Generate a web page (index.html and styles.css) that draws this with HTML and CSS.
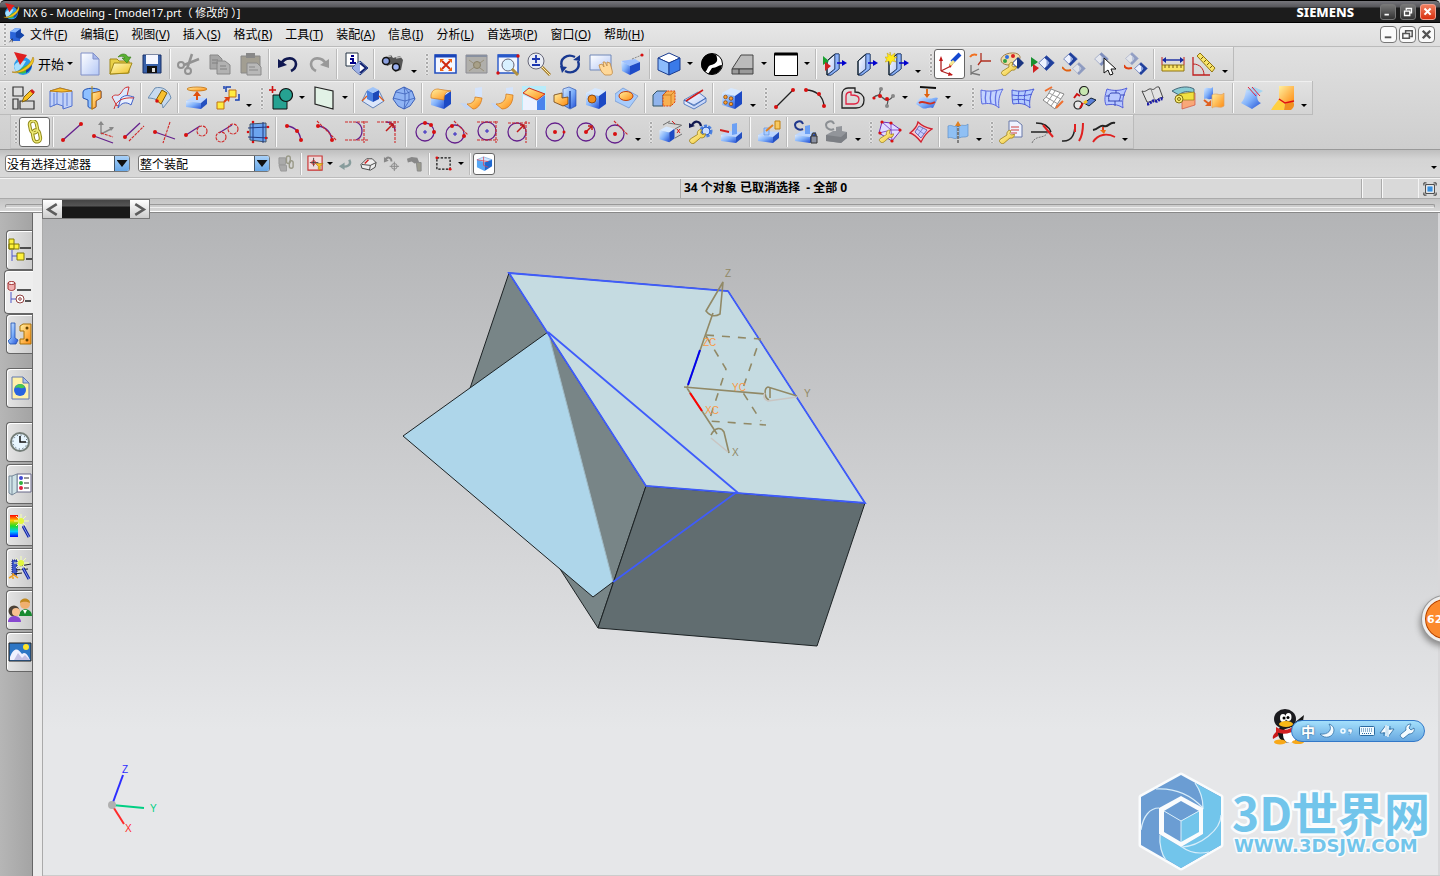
FILE: index.html
```
<!DOCTYPE html>
<html lang="zh-CN">
<head>
<meta charset="utf-8">
<title>NX 6 - Modeling</title>
<link rel="stylesheet" href="styles.css">
</head>
<body>
<svg class="defs" aria-hidden="true">
<defs>
<linearGradient id="B" x2="1" y2="1"><stop offset="0" stop-color="#dcecff"/><stop offset=".5" stop-color="#7fb0fa"/><stop offset="1" stop-color="#2450d4"/></linearGradient>
<linearGradient id="P" x2="1" y2="1"><stop offset="0" stop-color="#fff"/><stop offset="1" stop-color="#b4c8f6"/></linearGradient>
<linearGradient id="O" x2="1" y2="1"><stop offset="0" stop-color="#fff0a0"/><stop offset="1" stop-color="#ff8a10"/></linearGradient>
<linearGradient id="Y" x2="1" y2="1"><stop offset="0" stop-color="#fffbc0"/><stop offset="1" stop-color="#f0c020"/></linearGradient>
<linearGradient id="R" x2="0" y2="1"><stop offset="0" stop-color="#f00"/><stop offset=".25" stop-color="#fc0"/><stop offset=".5" stop-color="#2d2"/><stop offset=".75" stop-color="#0cf"/><stop offset="1" stop-color="#00f"/></linearGradient>
<symbol id="cube" viewBox="0 0 24 24"><path d="M2 7l9-5 11 3-7 5z" fill="#d6e8ff"/><path d="M2 7l13 3v13L2 19z" fill="url(#B)"/><path d="M15 10l7-5v13l-7 5z" fill="#1c49c4"/></symbol>
<symbol id="base" viewBox="0 0 24 24"><path d="M1 15l7-4 14 1-6 5z" fill="#bcd6ff"/><path d="M1 15l15 2v6L1 21z" fill="url(#B)"/><path d="M16 17l6-5v6l-6 5z" fill="#2450c0"/></symbol>
<symbol id="wrench" viewBox="0 0 24 24"><path d="M3 22c-2-2-1-4 1-5l8-5c-1-4 2-7 5-6l-1 4 2 2 4-1c0 4-3 6-6 5l-7 6c-2 2-4 2-6 0z" fill="url(#Y)" stroke="#98780c"/></symbol>
<symbol id="diamond" viewBox="0 0 24 24"><path d="M12 1l11 10-11 11L1 11z" fill="#eef2ff" stroke="#3550a0"/><path d="M12 1l11 10-11 11-3-3 7-8-7-7z" fill="#1f3f9c"/><path d="M12 6l4 5-4 6z" fill="#8ea4dc"/></symbol>
<symbol id="slab" viewBox="0 0 24 24"><path d="M4 9l8-7v15l-8 6z" fill="url(#P)" stroke="#123"/><path d="M4 9l8-7h4v15l-8 6H4z" fill="none" stroke="#123"/><path d="M12 2h4v15l-8 6H5l7-6z" fill="#8fb4f8" stroke="#24468c" stroke-width=".7"/><path d="M14 11h7" stroke="#00c" stroke-width="1.500"/><path d="M19 8l5 3-5 3z" fill="#00c"/></symbol>
<symbol id="nx" viewBox="0 0 24 24"><circle cx="12" cy="14" r="9" fill="#2a9bea"/><path d="M3 14c2-4 7-6 12-5-2 3-3 7-10 11z" fill="#a8e0ff"/><path d="M8 21c1-5 6-8 12-9 1 5-4 11-12 9z" fill="#35c24a"/><path d="M15 21c4-2 6-5 6-9l-6 3z" fill="#1040b0"/><path d="M1 20C8 21 20 13 22 5c4 6-9 19-21 15z" fill="#f4c91c" stroke="#a9780c" stroke-width=".6"/><path d="M3 0l13 3-7 10z" fill="#e02020"/></symbol>
<symbol id="wand" viewBox="0 0 24 24"><path d="M15 12l6 11" stroke="#1428a0" stroke-width="3"/><path d="M15 12l6 11" stroke="#8494f4"/><path d="M8 2l10 10M18 2L8 12M13 0v14M6 7h15" stroke="#f4ffb0"/><circle cx="13" cy="7" r="3" fill="#e2f83c"/></symbol>
</defs>
</svg>

<div class="app">
<header class="title">
  <svg class="logo" viewBox="0 0 24 24"><use href="#nx"/></svg>
  <h1>NX 6 - Modeling - [model17.prt（ 修改的 ）]</h1>
  <b class="brand">SIEMENS</b>
  <div class="wins">
    <button class="win" aria-label="Minimize"><svg viewBox="0 0 16 16"><path d="M4 11h5" stroke="#fff" stroke-width="2"/></svg></button>
    <button class="win" aria-label="Restore"><svg viewBox="0 0 16 16"><path d="M6 6V4h6v5h-2M4 7h6v5H4z" fill="none" stroke="#fff" stroke-width="1.500"/></svg></button>
    <button class="win shut" aria-label="Close"><svg viewBox="0 0 16 16"><path d="M4 4l7 7M11 4l-7 7" stroke="#fff" stroke-width="2.400"/></svg></button>
  </div>
</header>

<nav class="menu">
  <i class="grip"></i>
  <svg class="part" viewBox="0 0 24 24"><path d="M3 8l7-5 8 1v5l5 4-6 5v3H7l-4-3z" fill="#2a64d8"/><path d="M3 8l7-5 8 1-7 5z" fill="#8abaff"/><path d="M11 9l7-5v5l5 4-6 5-6-2z" fill="#1444a8"/><path d="M2 23l4-5v5" stroke="#223" fill="none"/></svg>
  <button>文件(<u>F</u>)</button><button>编辑(<u>E</u>)</button><button>视图(<u>V</u>)</button><button>插入(<u>S</u>)</button><button>格式(<u>R</u>)</button><button>工具(<u>T</u>)</button><button>装配(<u>A</u>)</button><button>信息(<u>I</u>)</button><button>分析(<u>L</u>)</button><button>首选项(<u>P</u>)</button><button>窗口(<u>O</u>)</button><button>帮助(<u>H</u>)</button>
  <div class="docs">
    <button aria-label="Minimize document"><svg viewBox="0 0 16 16"><path d="M4 11h7" stroke="#555" stroke-width="2"/></svg></button>
    <button aria-label="Restore document"><svg viewBox="0 0 16 16"><path d="M6 6V4h7v6h-2M3 7h7v5H3z" fill="none" stroke="#555" stroke-width="1.600"/></svg></button>
    <button aria-label="Close document"><svg viewBox="0 0 16 16"><path d="M4 4l8 8M12 4l-8 8" stroke="#555" stroke-width="2.600"/></svg></button>
  </div>
</nav>

<div class="bars">
<div class="row">
 <div class="band">
  <i class="grip"></i>
  <button class="start"><svg viewBox="0 0 24 24"><use href="#nx"/></svg>开始<i class="tri"></i></button>
  <button class="tb" aria-label="新建"><svg viewBox="0 0 24 24"><path d="M3 1h12l6 6v16H3z" fill="url(#P)" stroke="#8090c8"/><path d="M15 1v6h6z" fill="#a8b8ec" stroke="#8090c8"/></svg></button>
  <button class="tb" aria-label="打开"><svg viewBox="0 0 24 24"><path d="M1 7h7l2 2h10v12L1 22z" fill="#e8d048" stroke="#a08818"/><path d="M1 22l4-11h18l-4 10z" fill="url(#Y)" stroke="#a08818"/><path d="M9 5c3-4 8-4 10 0h3l-4 6-5-5h3c-2-2-4-2-7-1z" fill="#58b030" stroke="#347814" stroke-width=".6"/></svg></button>
  <button class="tb" aria-label="保存"><svg viewBox="0 0 24 24"><path d="M3 3h18v18H3z" fill="#3860a8" stroke="#183068"/><path d="M6 3h12v9H6z" fill="#f4f6ff"/><path d="M7 14h10v7H7z" fill="#111"/><path d="M12 16h3v4h-3z" fill="#ddd"/></svg></button>
  <i class="sep"></i>
  <button class="tb" aria-label="剪切"><svg viewBox="0 0 24 24"><path d="M15 2L10 17M22 7L7 13" stroke="#929292" stroke-width="2.500"/><circle cx="4" cy="13" r="3" stroke="#929292" stroke-width="2"/><circle cx="11" cy="19" r="3" stroke="#929292" stroke-width="2"/></svg></button>
  <button class="tb" aria-label="复制"><svg viewBox="0 0 24 24"><path d="M2 3h8l4 4v10H2z" fill="#a6a6a6" stroke="#888"/><path d="M9 9h8l5 4v9H9z" fill="#b2b2b2" stroke="#888"/><path d="M4 8h6M4 11h6M12 14h6M12 17h7" stroke="#808080"/></svg></button>
  <button class="tb" aria-label="粘贴"><svg viewBox="0 0 24 24"><path d="M2 4h19v17H2z" fill="#a29e92" stroke="#888"/><path d="M7 1h9v5H7z" fill="#888"/><path d="M8 11h10l4 4v8H8z" fill="#b8b8b8" stroke="#8a8a8a"/><path d="M10 15h6M10 18h9" stroke="#888"/></svg></button>
  <i class="sep"></i>
  <button class="tb" aria-label="撤消"><svg viewBox="0 0 24 24"><path d="M5 12C9 4 20 5 20 12c0 4-3 6-5 7" stroke="#101850" stroke-width="2.600"/><path d="M2 7v9l9-3z" fill="#101850"/></svg></button>
  <button class="tb" aria-label="重做"><svg viewBox="0 0 24 24"><path d="M19 12C15 4 4 5 4 12c0 4 3 6 5 7" stroke="#999" stroke-width="2.600"/><path d="M22 7v9l-9-3z" fill="#999"/></svg></button>
  <i class="sep"></i>
  <button class="tb" aria-label="对象信息"><svg viewBox="0 0 24 24"><path d="M2 1h12v13H2z" fill="#fff" stroke="#234"/><path d="M7 4h3M6 7h3v4M6 11h6" stroke="#008" stroke-width="2"/><path d="M16 9l8 7-8 7-8-7z" fill="#fff" stroke="#123080"/><path d="M16 9v14l-8-7z" fill="#9db0e4"/><path d="M16 11l6 5-6 5" stroke="#102070" stroke-width="2"/></svg></button>
  <i class="sep"></i>
  <button class="tb" aria-label="查找命令"><svg viewBox="0 0 24 24"><path d="M2 6l8-3 2 3 7-2 3 4-2 10-6 2-3-8-5 2z" fill="#555"/><path d="M5 5l5-1M15 6l5-1" stroke="#bbb" stroke-width="1.500"/><circle cx="5" cy="9" r="3.500" fill="#8ba0e0" stroke="#111" stroke-width="1.500"/><circle cx="15" cy="15" r="3.500" fill="#9bb0f0" stroke="#111" stroke-width="1.500"/></svg></button>
  <i class="more"></i>
 </div>
 <div class="band">
  <i class="grip"></i>
  <button class="tb" aria-label="适合窗口"><svg viewBox="0 0 24 24"><path d="M1 3h21v18H1z" fill="#f4f7ff" stroke="#2450c0" stroke-width="1.600"/><path d="M1 4h21" stroke="#1a44b8" stroke-width="3"/><path d="M8 9l8 8M16 9l-8 8" stroke="#d02810" stroke-width="2"/><path d="M6 7h4l-4 4zM18 7h-4l4 4zM6 19h4l-4-4zM18 19h-4l4-4z" fill="#f06010"/></svg></button>
  <button class="tb" aria-label="适合所选"><svg viewBox="0 0 24 24"><path d="M1 3h21v18H1z" fill="#b0afab" stroke="#8c8c94"/><path d="M1 4h21" stroke="#8890a0" stroke-width="2"/><path d="M4 8l15 11M19 8L4 19" stroke="#98907c"/><circle cx="12" cy="13" r="3.500" fill="#a8a088" stroke="#888068"/></svg></button>
  <button class="tb" aria-label="缩放窗口"><svg viewBox="0 0 24 24"><path d="M2 3h20v18H2z" fill="#f2f6ff" stroke="#2858c8" stroke-width="1.400"/><path d="M2 4h20" stroke="#2858c8" stroke-width="3"/><circle cx="12" cy="13" r="6" fill="#d8f0ff" stroke="#667"/><path d="M16 17l6 6" stroke="#b09040" stroke-width="3"/><circle class="dot" cx="22" cy="4" r="1.700"/><circle class="dot" cx="2" cy="21" r="1.700"/></svg></button>
  <button class="tb" aria-label="缩放"><svg viewBox="0 0 24 24"><circle cx="9" cy="9" r="8" fill="#e8ecf4" stroke="#667"/><path d="M5 7h8M9 3v8M5 13h8" stroke="#1b36b0" stroke-width="1.800"/><path d="M15 15l8 8" stroke="#a88030" stroke-width="3"/><path d="M15 15l8 8" stroke="#fff2b0"/></svg></button>
  <button class="tb" aria-label="旋转"><svg viewBox="0 0 24 24"><path d="M4 15C1 7 9 1 17 5M20 9c3 8-5 14-13 10" stroke="#183890" stroke-width="2.400"/><path d="M15 8l7 1V3zM9 15l-7-1 2 7z" fill="#183890"/></svg></button>
  <button class="tb" aria-label="平移"><svg viewBox="0 0 24 24"><path d="M1 3h21v15H1z" fill="url(#P)" stroke="#7088b8"/><path d="M10 13l3-1 2 3-1-5 2 0 2 4 0-4 3 1 2 7c1 3 0 5-2 5h-5c-3-2-5-5-6-10z" fill="#ffd898" stroke="#c08840" stroke-width=".8"/></svg></button>
  <button class="tb" aria-label="透视"><svg viewBox="0 0 24 24"><path d="M1 9l14-2 5 3-10 4z" fill="#9cc0ff"/><path d="M1 9l9 5v9L2 19z" fill="url(#B)"/><path d="M10 14l10-4v8l-10 5z" fill="#1f4cc8"/><path d="M12 7l10-4" stroke="#888" stroke-dasharray="2 1"/><circle class="dot" cx="22" cy="3" r="1.600"/></svg></button>
  <i class="sep"></i>
  <button class="tb" aria-label="着色"><svg viewBox="0 0 24 24"><path d="M1 6l11-5 11 5-11 5z" fill="#fff" stroke="#1a3c90"/><path d="M1 6l11 5v12L1 18z" fill="#8cbcfc" stroke="#1a3c90"/><path d="M23 6L12 11v12l11-5z" fill="#3a7ae8" stroke="#1a3c90"/></svg></button><i class="drop"></i>
  <button class="tb" aria-label="背景"><svg viewBox="0 0 24 24"><circle cx="12" cy="12" r="10.500" fill="#fff" stroke="#000"/><path d="M12 1.500A10.500 10.500 0 0 0 5 20c3-2 2-6 6-7s7-3 6-7 0-3-5-4.500z" fill="#000"/><path d="M22 13c-4 0-5 3-10 3l-4 6c7 2 13-2 14-9z" fill="#000"/></svg></button>
  <button class="tb" aria-label="截面"><svg viewBox="0 0 24 24"><path d="M1 17l9-14h12v14z" fill="#bbb" stroke="#444"/><path d="M1 17h21v5H1z" fill="#9a9a9a" stroke="#444"/><path d="M8 17v5" stroke="#333"/></svg></button><i class="drop"></i>
  <button class="tb" aria-label="颜色"><svg viewBox="0 0 24 24"><path d="M.5 1.500h23v22H.5z" fill="#fff" stroke="#000"/><path d="M.5 2h23" stroke="#000" stroke-width="3"/></svg></button><i class="drop"></i>
  <i class="sep"></i>
  <button class="tb" aria-label="显示"><svg viewBox="0 0 24 24"><use href="#slab"/><path d="M0 4l6 5-6 4z" fill="#18a030"/><path d="M2 10l6 4-6 5z" fill="#d02020"/></svg></button>
  <button class="tb" aria-label="编辑截面"><svg viewBox="0 0 24 24"><use href="#slab"/></svg></button>
  <button class="tb" aria-label="新建截面"><svg viewBox="0 0 24 24"><use href="#slab"/><path d="M5 0l1 4 4-3-1 4h3l-3 2 2 3-4-1-2 4-1-4-4 1 2-3-3-2h4L2 1l3 2z" fill="#ffe91c" stroke="#b09000" stroke-width=".4"/></svg></button>
  <i class="more"></i>
 </div>
 <div class="band">
  <i class="grip"></i>
  <button class="tb on" aria-label="WCS"><svg viewBox="0 0 24 24"><path d="M3 19V8M3 19l10-5M3 19l11 4" stroke="#b02020" stroke-width="1.300"/><path d="M1 9l2-5 2 5zM11 12l4 0-3 4zM11 20l4 3-5 1z" fill="#c01818"/><path d="M14 10l8-8" stroke="#1448d0" stroke-width="4"/><path d="M12 13l4-4" stroke="#f4e890" stroke-width="3"/></svg></button>
  <button class="tb" aria-label="WCS 动态"><svg viewBox="0 0 24 24"><path d="M12 9V1M12 9h10M12 9l-3 4" stroke="#b03020" stroke-width="1.300"/><path d="M2 13v10M2 21l8-4M2 21l9 2" stroke="#777" stroke-width="1.300"/><path d="M1 5c2-3 4-3 7-2" stroke="#f07020" stroke-width="2"/></svg></button>
  <button class="tb" aria-label="对象显示"><svg viewBox="0 0 24 24"><path d="M1 8c0-8 20-10 19-2-1 4-5 2-6 5s-13 3-13-3z" fill="#f0dca8" stroke="#a08050"/><circle cx="7" cy="5" r="2" fill="#3070e0"/><circle cx="13" cy="4" r="2" fill="#d82020"/><circle cx="5" cy="9" r="2" fill="#30a040"/><path d="M18 5l6 6-6 6-6-6z" fill="#1b3580"/><path d="M17 7v8l-4-4z" fill="#fff"/><use href="#wrench" x="0" y="6" width="18" height="18"/></svg></button>
  <button class="tb" aria-label="显示和隐藏"><svg viewBox="0 0 24 24"><use href="#diamond" x="7" y="3" width="17" height="17"/><path d="M0 5l7 5-7 5z" fill="#189030"/><path d="M2 12l6 4-6 5z" fill="#d02020"/></svg></button>
  <button class="tb" aria-label="隐藏"><svg viewBox="0 0 24 24"><use href="#diamond" x="1" y="0" width="15" height="15"/><g opacity=".4"><use href="#diamond" x="10" y="10" width="14" height="14"/></g><path d="M0 15c3 4 5 4 9 3" stroke="#e06010" stroke-width="2"/></svg></button>
  <button class="tb" aria-label="选择对象"><svg viewBox="0 0 24 24"><g opacity=".5"><use href="#diamond" x="1" y="0" width="15" height="15"/></g><path d="M11 6v15l4-3 2 5 3-1-2-5h5z" fill="#fff" stroke="#111"/></svg></button>
  <button class="tb" aria-label="反转显示"><svg viewBox="0 0 24 24"><g opacity=".4"><use href="#diamond" x="1" y="0" width="14" height="14"/></g><use href="#diamond" x="10" y="10" width="14" height="14"/><path d="M0 13c1 4 4 4 8 3" stroke="#e04010" stroke-width="2"/></svg></button>
  <i class="sep"></i>
  <button class="tb" aria-label="测量距离"><svg viewBox="0 0 24 24"><path d="M1 5v8M23 5v8" stroke="#c02020"/><path d="M2 8h20" stroke="#1428a0" stroke-width="1.400"/><path d="M1 8l4-3v6zM23 8l-4-3v6z" fill="#1428a0"/><path d="M1 13h22v6H1z" fill="#f8e468" stroke="#907410"/><path d="M4 13v3M8 13v3M12 13v3M16 13v3M20 13v3" stroke="#705810"/></svg></button>
  <button class="tb" aria-label="测量角度"><svg viewBox="0 0 24 24"><path d="M1 5v18h17" stroke="#c02020" stroke-width="1.300"/><path d="M1 12c7 0 11 5 11 11" stroke="#c02020"/><path d="M5 4l3-3 15 15-3 4z" fill="#f8e468" stroke="#907410"/><path d="M9 7l2-2M12 10l2-2M15 13l2-2M18 16l2-2" stroke="#705810"/></svg></button>
  <i class="more"></i>
 </div>
</div>

<div class="row">
 <div class="band">
  <i class="grip"></i>
  <button class="tb" aria-label="草图"><svg viewBox="0 0 24 24"><path d="M1 1h10v9H1zM1 13h5v10H1zM8 15h14v8H8z" stroke="#333" stroke-width="1.200"/><path d="M10 16l2-5 7-7 3 3-7 7z" fill="#f8c020" stroke="#806010"/><path d="M18 5l2-2 3 3-2 2z" fill="#d02020"/></svg></button>
  <i class="sep"></i>
  <button class="tb" aria-label="拉伸"><svg viewBox="0 0 24 24"><path d="M1 5l10-3 12 3v15l-9 3v-3l-6-2-7 3z" fill="#c2d2f8" stroke="#5070d0"/><path d="M1 5l10-3 12 3-10 1z" fill="#f8c030" stroke="#c08010"/><path d="M5 7v13M8 6v12M14 7v15M18 7v13" stroke="#6080d8"/></svg></button>
  <button class="tb" aria-label="回转"><svg viewBox="0 0 24 24"><path d="M3 6c0-5 18-5 18 0v6l-5 2v6c0 3-8 3-8 0v-6l-5-2z" fill="#8ec0ff" stroke="#2050b0"/><path d="M12 7l9-2v7l-5 3v6l-4 2z" fill="url(#O)" stroke="#b06010"/><path d="M12 0v24" stroke="#c09010"/></svg></button>
  <button class="tb" aria-label="扫掠"><svg viewBox="0 0 24 24"><path d="M1 11c4-4 5 0 8-3s3-7 9-7l-2 9c-5 1-4 8-10 10z" fill="#dce8fc" stroke="#d03030"/><path d="M10 12c5-4 8-2 13-1l-3 8c-5-4-10-2-13 3z" fill="#e8f0ff" stroke="#4060c8"/><path d="M3 23c2-8 8-12 20-11" stroke="#d03030"/></svg></button>
  <i class="sep"></i>
  <button class="tb" aria-label="管道"><svg viewBox="0 0 24 24"><path d="M0 12L7 2c7-2 14 2 16 10l-8 10c0-6-7-10-15-10z" fill="#c8daee" stroke="#6a8cb0"/><path d="M8 14l6-10 5 3-6 11z" fill="#f8c030" stroke="#805c00"/><circle class="dot" cx="9" cy="15" r="1.800"/></svg></button>
  <i class="sep"></i>
  <button class="tb" aria-label="凸台"><svg viewBox="0 0 24 24"><use href="#base"/><ellipse cx="12" cy="3" rx="10" ry="2" fill="url(#O)" stroke="#c07010" stroke-width=".8"/><path d="M12 14V9" stroke="#e05010" stroke-width="2"/><path d="M8 10l4-5 4 5z" fill="#e05010"/></svg></button>
  <button class="tb" aria-label="实例"><svg viewBox="0 0 24 24"><path d="M1 16h7v7H1zM13 4h7v7h-7z" fill="#ffec40" stroke="#c07010"/><path d="M8 16l3-3" stroke="#e04010" stroke-width="2"/><path d="M8 11l6 0-1 5z" fill="#e04010"/><path d="M10 6V1h5M8 3V0M19 14l4 0V8" stroke="#1840b0" stroke-width="1.500"/></svg></button>
  <i class="more"></i>
 </div>
 <div class="band">
  <i class="grip"></i>
  <button class="tb" aria-label="求和"><svg viewBox="0 0 24 24"><path d="M4 9h14v14H4z" fill="#26a292" stroke="#111"/><circle cx="17" cy="9" r="6.500" fill="#26a292" stroke="#111" stroke-width="1.200"/><path d="M0 4h7M3.500 0v7" stroke="#d01010" stroke-width="1.600"/></svg></button><i class="drop"></i>
  <button class="tb" aria-label="基准平面"><svg viewBox="0 0 24 24"><path d="M3 1l18 4v18L3 18z" fill="#e2f2e6" stroke="#222" stroke-width="1.200"/></svg></button><i class="drop"></i>
  <i class="sep"></i>
  <button class="tb" aria-label="拔模"><svg viewBox="0 0 24 24"><path d="M6 5L1 15l11 7 11-7-5-10" fill="#dbe6fa" stroke="#6080b8"/><path d="M6 4l6 3v9l-6-3z" fill="#4a80e0"/><path d="M18 4l-6 3v9l6-3z" fill="#1c48b8"/><path d="M6 4l6-3 6 3-6 3z" fill="#a0c4f8"/><path d="M1 15l5-5M23 15l-5-5" stroke="#e06020" stroke-width="1.400"/></svg></button>
  <button class="tb" aria-label="球体"><svg viewBox="0 0 24 24"><path d="M12 1l8 4 3 8-5 7-6 3-6-3-5-7 3-8z" fill="#90b4f4" stroke="#3c60b8"/><path d="M12 1l5 6v8l-5 8M4 6l9 2 7-3M1 12l12 3 10-3M13 8v7l-1 8M13 8l-1-7" stroke="#3c60b8" stroke-width=".8"/></svg></button>
  <i class="sep"></i>
  <button class="tb" aria-label="边倒圆"><svg viewBox="0 0 24 24"><use href="#cube"/><path d="M2 12V9c1-4 3-6 7-6l13 2c-5 0-7 3-7 9z" fill="url(#O)" stroke="#d07820" stroke-width=".7"/></svg></button>
  <button class="tb" aria-label="面倒圆"><svg viewBox="0 0 24 24"><path d="M15 2l7-1v11l-7 2z" fill="#d4e4fc"/><path d="M0 17l10 1 5 4-9 1z" fill="#c4d6f4"/><path d="M15 11l7 1c-1 7-5 11-9 11l-6-5c5 0 8-3 8-7z" fill="url(#O)" stroke="#d07010" stroke-width=".7"/></svg></button>
  <button class="tb" aria-label="软倒圆"><svg viewBox="0 0 24 24"><path d="M15 2l7-1v9l-7 1z" fill="#d4e4fc"/><path d="M0 17l8 1 5 4-9 1z" fill="#c4d6f4"/><path d="M15 8l7 1c0 9-5 14-11 14l-6-5c7 0 10-4 10-10z" fill="url(#O)" stroke="#d07010" stroke-width=".7"/></svg></button>
  <button class="tb" aria-label="倒斜角"><svg viewBox="0 0 24 24"><path d="M0 0h24v24H0z" fill="#b8ecfa"/><path d="M1 9l14 6v9H1z" fill="#edf2ff"/><path d="M15 15l8-6v15h-8z" fill="#4a84ec"/><path d="M1 7l6-5 16 6-8 6z" fill="url(#O)" stroke="#d03020"/></svg></button>
  <button class="tb" aria-label="抽壳"><svg viewBox="0 0 24 24"><path d="M10 3l6-2 7 3v16l-6 3-7-4z" fill="url(#B)" stroke="#1d46a8" stroke-width=".6"/><path d="M1 9l8-2v5l6-1v7l-5 2-9-4z" fill="url(#O)" stroke="#704010" stroke-width=".8"/><path d="M17 5v17" stroke="#1d46a8" stroke-width="1.500"/></svg></button>
  <button class="tb" aria-label="孔"><svg viewBox="0 0 24 24"><use href="#cube"/><circle cx="8" cy="13" r="4" fill="#f09020" stroke="#803800" stroke-width=".8"/></svg></button>
  <button class="tb" aria-label="凸起"><svg viewBox="0 0 24 24"><path d="M0 8l8-6 15 8-9 12L0 15z" fill="#a8ccfc" stroke="#6890d0" stroke-width=".7"/><ellipse cx="11" cy="10" rx="7" ry="4.500" fill="url(#O)" stroke="#c04010"/></svg></button>
  <i class="sep"></i>
  <button class="tb" aria-label="修剪体"><svg viewBox="0 0 24 24"><path d="M1 9l4-4h10l-4 4v11H1z" fill="#90b4ec" stroke="#356"/><path d="M11 9l4-4h8v11l-4 4h-8z" fill="#f8b050" stroke="#e04010" stroke-dasharray="2 1"/><path d="M11 9h8v11M19 9l4-4" stroke="#c07010" stroke-width=".7"/></svg></button>
  <button class="tb" aria-label="分割"><svg viewBox="0 0 24 24"><path d="M1 14l14-8 8 6-12 8zM1 14v4l10 5 12-7v-4l-12 7z" fill="url(#P)" stroke="#3c68b8" stroke-width=".8"/><path d="M3 15L20 4" stroke="#d01818" stroke-width="1.500"/></svg></button>
  <i class="sep"></i>
  <button class="tb" aria-label="实例特征"><svg viewBox="0 0 24 24"><use href="#cube"/><g fill="#f8a030" stroke="#803800" stroke-width=".7"><circle cx="5.500" cy="11" r="1.800"/><circle cx="11" cy="12.500" r="1.800"/><circle cx="5.500" cy="16.500" r="1.800"/><circle cx="11" cy="18" r="1.800"/></g></svg></button>
  <i class="more"></i>
 </div>
 <div class="band">
  <i class="grip"></i>
  <button class="tb" aria-label="直线"><svg viewBox="0 0 24 24"><path d="M3 21L20 4" stroke="#222" stroke-width="1.300"/><circle class="dot" cx="3" cy="21" r="2"/><circle class="dot" cx="20" cy="4" r="2"/></svg></button>
  <button class="tb" aria-label="圆弧"><svg viewBox="0 0 24 24"><path d="M2 4c8 0 18 5 18 17" stroke="#222" stroke-width="1.300"/><circle class="dot" cx="2" cy="4" r="2"/><circle class="dot" cx="15" cy="8" r="2"/><circle class="dot" cx="20" cy="20" r="2"/></svg></button>
  <i class="sep"></i>
  <button class="tb" aria-label="偏置曲线"><svg viewBox="0 0 24 24"><path d="M1 22V9c0-5 3-7 6-7h7v4c5 0 9 3 9 8s-3 8-8 8z" stroke="#222" stroke-width="1.300"/><path d="M5 18v-8c0-3 2-4 5-4v3c5 0 8 1 8 4s-2 5-5 5z" stroke="#e02040" stroke-width="1.300"/></svg></button>
  <button class="tb" aria-label="样条"><svg viewBox="0 0 24 24"><path d="M1 12c5-5 8-2 10 0s6 4 10-2M9 3l-2 7M15 20l1-6" stroke="#555" stroke-width="1.300"/><g fill="#888"><circle cx="9" cy="3" r="2"/><circle cx="15" cy="20" r="2"/><circle cx="21" cy="10" r="2"/></g><circle class="dot" cx="2" cy="12" r="1.600"/><circle class="dot" cx="8" cy="10" r="2"/><circle class="dot" cx="15" cy="13" r="2"/></svg></button><i class="drop"></i>
  <button class="tb" aria-label="投影"><svg viewBox="0 0 24 24"><path d="M5 1l16 1" stroke="#111" stroke-width="2"/><path d="M1 18c4-8 6-8 11-6s8-2 11 0l-5 10c-4-2-7 2-11 0z" fill="url(#B)"/><path d="M4 17c5-4 9 4 16-1" stroke="#d03020" stroke-width="1.800"/><path d="M12 3v6" stroke="#e07020" stroke-width="2"/><path d="M9 8h6l-3 4z" fill="#e06010"/></svg></button><i class="drop"></i>
  <i class="more"></i>
 </div>
 <div class="band">
  <i class="grip"></i>
  <button class="tb" aria-label="直纹"><svg viewBox="0 0 24 24"><path d="M1 4c7 2 15 1 22-1-4 6-5 13-4 19-5-5-11-5-17-4-1-4-1-9-1-14z" fill="#c4d4ff" stroke="#5c6ce0"/><path d="M6 5c-1 5-1 9 0 13M11 5c-1 5-1 9 0 13M17 4c-2 5-2 10-1 16" stroke="#6474e4" stroke-width="1.300"/></svg></button>
  <button class="tb" aria-label="曲线组"><svg viewBox="0 0 24 24"><path d="M1 4c7 2 15 1 22-1-4 6-5 13-4 19-5-5-11-5-17-4-1-4-1-9-1-14z" fill="#b4ccff" stroke="#4c5cd8"/><path d="M8 5c-1 5-1 9 0 13M15 4c-2 5-2 10-1 15M1 9c7 1 14 1 20-1M1 14c7-1 12-1 18 1" stroke="#4c5cd8"/></svg></button>
  <button class="tb" aria-label="曲线网格"><svg viewBox="0 0 24 24"><path d="M9 3l13 5c-3 5-7 9-9 15L1 14c4-3 6-7 8-11z" fill="#fff" stroke="#888"/><path d="M13 5L5 17M18 7L9 20M4 11l12 7M7 7l12 6" stroke="#999"/><path d="M3 5l7-4M14 22l7-7" stroke="#f07030" stroke-width="2"/></svg></button>
  <button class="tb" aria-label="N 边曲面"><svg viewBox="0 0 24 24"><circle cx="11" cy="5" r="4.500" fill="#c8e8b0" stroke="#222" stroke-width="1.200"/><circle cx="5" cy="19" r="4" fill="#e8e8e8" stroke="#222" stroke-width="1.200"/><path d="M1 12l3-4 3 2M7 22l3-5" stroke="#d01010" stroke-width="2"/><path d="M11 17l7-5 5 2-7 6z" fill="#5c80d8" stroke="#123"/><path d="M11 17l3-2" stroke="#f8c020" stroke-width="3"/></svg></button>
  <button class="tb" aria-label="曲面"><svg viewBox="0 0 24 24"><path d="M3 3c6 2 13 2 20-1-4 7-5 13-4 20-5-4-12-4-17-3-2-5-1-10 1-16z" fill="#b8c8ff" stroke="#5460dc"/><path d="M5 15c-1-5 0-8 3-8h6c3 0 3 4 1 8M2 10h4M4 15h14M17 9h4M12 4v3M11 15v5" stroke="#3848b8"/></svg></button>
  <i class="sep"></i>
  <button class="tb" aria-label="缝合"><svg viewBox="0 0 24 24"><path d="M1 5c4 2 6-3 9-2 4 2 4-3 8-2l4 11c-4-2-6 4-9 3-3-1-4 2-7 1z" fill="#e2e2e2" stroke="#444"/><path d="M10 3l4 12" stroke="#888"/><path d="M6 18c4 0 4-4 9-3 2 1 3-3 7-2" stroke="#1a1aa8" stroke-width="3" stroke-dasharray="2 1"/></svg></button>
  <button class="tb" aria-label="偏置曲面"><svg viewBox="0 0 24 24"><path d="M0 5c8-5 17-5 22-2v4c-6-2-11-2-15 2z" fill="#88ccd4" stroke="#467"/><path d="M10 12l13-5v12l-13 4z" fill="#f8a878" stroke="#d05040" stroke-width=".7"/><path d="M7 8l15-2v8H7z" fill="#f0e040" stroke="#907c10" stroke-width=".7"/><circle cx="7" cy="13" r="4" fill="#f8ec70" stroke="#807010"/><circle cx="7" cy="13" r="1.500" stroke="#807010"/></svg></button>
  <button class="tb" aria-label="变换"><svg viewBox="0 0 24 24"><path d="M1 3c3-3 6 1 9-2v11c-4 3-6-1-9 1z" fill="url(#B)"/><path d="M9 9c5-3 8 2 12-2v13c-4 3-8-1-12 2z" fill="url(#O)" stroke="#e0a060" stroke-width=".7"/><path d="M1 14l5 4" stroke="#e06020" stroke-width="2"/><path d="M8 14v6H2z" fill="#e06020"/></svg></button>
  <i class="sep"></i>
  <button class="tb" aria-label="修剪"><svg viewBox="0 0 24 24"><path d="M6 4c5 2 9 1 12 3-2 5 0 9 3 10l-9 6-11-6c3-3 4-7 5-13z" fill="url(#B)"/><path d="M6 4l8-3 9 4-5 3z" fill="#a4d4f0"/><path d="M8 1l8 9M12 1l8 9" stroke="#e02040"/></svg></button>
  <button class="tb" aria-label="圆角曲面"><svg viewBox="0 0 24 24"><path d="M8 0h15v15l-9 3-6-5z" fill="url(#O)"/><path d="M0 24c3-5 6-8 8-11l6 5-1 6z" fill="#ffd040"/><path d="M14 18l8-3c2 4 1 6-2 9h-7z" fill="#f09020"/><path d="M8 13l6 4 9-2" stroke="#e01010" stroke-width="1.500"/></svg></button>
  <i class="more"></i>
 </div>
</div>

<div class="row inset">
 <div class="band">
  <i class="grip"></i>
  <button class="tb on" aria-label="约束链"><svg viewBox="0 0 24 24"><g stroke="#908818" stroke-width="3.400"><rect x="7" y="1" width="7" height="12" rx="3.500" transform="rotate(-12 10 7)"/><rect x="10" y="10" width="7" height="12" rx="3.500" transform="rotate(-12 13 16)"/></g><g stroke="#f0ec78" stroke-width="1.500"><rect x="7" y="1" width="7" height="12" rx="3.500" transform="rotate(-12 10 7)"/><rect x="10" y="10" width="7" height="12" rx="3.500" transform="rotate(-12 13 16)"/></g></svg></button>
  <i class="sep"></i>
  <button class="tb" aria-label="直线 点-点"><svg viewBox="0 0 24 24"><path class="pur" d="M3 20L21 4"/><circle class="dot" cx="3" cy="20" r="2"/><circle class="dot" cx="21" cy="4" r="2"/></svg></button>
  <button class="tb" aria-label="直线 点-XYZ"><svg viewBox="0 0 24 24"><path d="M10 14V2M10 14l12-6" stroke="#888" stroke-width="1.400"/><path d="M7 5l3-4 3 4zM18 7l5 0-3 4z" fill="#888"/><path class="pur" d="M3 16l19 7"/><path class="red" d="M10 13l12 4"/><circle class="dot" cx="3" cy="16" r="2"/></svg></button>
  <button class="tb" aria-label="平行线"><svg viewBox="0 0 24 24"><path class="pur" d="M3 17L18 3"/><path class="red" d="M7 21L22 6"/><circle class="dot" cx="3" cy="17" r="2"/></svg></button>
  <button class="tb" aria-label="垂直线"><svg viewBox="0 0 24 24"><path class="pur" d="M2 12l20 7"/><path class="red" d="M17 2l-7 21"/><circle class="dot" cx="2" cy="12" r="2"/></svg></button>
  <button class="tb" aria-label="相切线"><svg viewBox="0 0 24 24"><path class="pur" d="M2 15L16 6"/><circle class="red" cx="18" cy="11" r="5"/><circle class="dot" cx="2" cy="15" r="2"/></svg></button>
  <button class="tb" aria-label="双切线"><svg viewBox="0 0 24 24"><path class="pur" d="M4 13L17 5"/><circle class="red" cx="18" cy="9" r="5"/><circle class="red" cx="6" cy="17" r="5"/></svg></button>
  <button class="tb" aria-label="无界直线"><svg viewBox="0 0 24 24"><path d="M4 4l16-1v19L4 20z" fill="#6ca4f0" stroke="#456"/><path d="M7 1v20M17 2v21M2 8l20-1M2 17l20 1" stroke="#203880"/><g class="dot"><circle cx="7" cy="2" r="1.300"/><circle cx="22" cy="7" r="1.300"/><circle cx="2" cy="12" r="1.300"/><circle cx="7" cy="22" r="1.300"/><circle cx="20" cy="18" r="1.300"/></g></svg></button>
  <i class="sep"></i>
  <button class="tb" aria-label="圆弧 三点"><svg viewBox="0 0 24 24"><path class="pur" d="M4 6c8 1 13 6 14 15"/><circle class="dot" cx="4" cy="6" r="2"/><circle class="dot" cx="14" cy="11" r="2"/><circle class="dot" cx="18" cy="20" r="2"/></svg></button>
  <button class="tb" aria-label="圆弧 切点"><svg viewBox="0 0 24 24"><path class="pur" d="M4 6c8 1 13 6 14 15"/><path class="red" d="M3 1l19 19"/><circle class="dot" cx="4" cy="6" r="2"/><circle class="dot" cx="18" cy="20" r="2"/></svg></button>
  <button class="tb" aria-label="圆弧 两切线"><svg viewBox="0 0 24 24"><path class="pur" d="M11 2c8 3 8 15 0 18"/><path class="red" d="M0 2h23M0 20h23M19 1v22"/></svg></button>
  <button class="tb" aria-label="圆弧 半径"><svg viewBox="0 0 24 24"><path class="pur" d="M10 2c6 0 9 3 9 9"/><path class="red" d="M1 2h22M19 1v22"/><path d="M10 11l7-7M13 4h4v4" stroke="#c01818" stroke-width="1.500"/></svg></button>
  <i class="sep"></i>
  <button class="tb" aria-label="圆 三点"><svg viewBox="0 0 24 24"><circle class="pur" cx="12" cy="12" r="9"/><path d="M10 12h4M12 10v4" stroke="#3020c0"/><g class="dot"><circle cx="12" cy="3" r="2"/><circle cx="18" cy="5" r="2"/><circle cx="21" cy="12" r="2"/></g></svg></button>
  <button class="tb" aria-label="圆 点相切"><svg viewBox="0 0 24 24"><circle class="pur" cx="11" cy="14" r="9"/><path d="M9 14h4M11 12v4" stroke="#3020c0"/><path class="red" d="M10 1l14 14"/><g class="dot"><circle cx="8" cy="6" r="2"/><circle cx="20" cy="16" r="2"/></g></svg></button>
  <button class="tb" aria-label="圆 三切线"><svg viewBox="0 0 24 24"><circle class="pur" cx="12" cy="11" r="9"/><path d="M10 11h4M12 9v4" stroke="#3020c0"/><path class="red" d="M2 2h21M2 20h21M21 1v22"/></svg></button>
  <button class="tb" aria-label="圆 切线半径"><svg viewBox="0 0 24 24"><circle class="pur" cx="11" cy="12" r="9"/><path class="red" d="M2 3h22M20 1v22"/><path d="M11 12l7-7M14 5h4v4" stroke="#c01818" stroke-width="1.500"/></svg></button>
  <i class="sep"></i>
  <button class="tb" aria-label="圆 中心点"><svg viewBox="0 0 24 24"><circle class="pur" cx="12" cy="12" r="9"/><circle class="dot" cx="12" cy="12" r="2"/><circle class="dot" cx="21" cy="12" r="1.500"/></svg></button>
  <button class="tb" aria-label="圆 中心半径"><svg viewBox="0 0 24 24"><circle class="pur" cx="12" cy="12" r="9"/><path d="M12 12l6-6M14 6h4v4" stroke="#c01818" stroke-width="1.500"/><circle class="dot" cx="12" cy="12" r="2"/></svg></button>
  <button class="tb" aria-label="圆 中心切线"><svg viewBox="0 0 24 24"><circle class="pur" cx="10" cy="14" r="9"/><path class="red" d="M9 1l14 14"/><circle class="dot" cx="10" cy="14" r="2"/></svg></button>
  <i class="more"></i>
 </div>
 <div class="band">
  <i class="grip"></i>
  <button class="tb" aria-label="尺寸"><svg viewBox="0 0 24 24"><use href="#cube" x="0" y="4" width="18" height="20"/><path d="M5 5l7-4M17 9l7-4M17 18l7-4M10 3l13 2" stroke="#555" stroke-width=".8"/><path d="M19 9l3 4M22 9l-3 4M14 1l3 3" stroke="#d01818"/></svg></button>
  <button class="tb" aria-label="编辑特征"><svg viewBox="0 0 24 24"><circle cx="17" cy="11" r="5" fill="#c8dcff" stroke="#4a80e0" stroke-width="3" stroke-dasharray="3 1.200"/><circle cx="17" cy="11" r="4" stroke="#3060c8"/><use href="#wrench" x="-1" y="5" width="19" height="19"/><path d="M3 5c3-5 8-4 9 1" stroke="#101850" stroke-width="2.200"/><path d="M0 3v5l6-2z" fill="#101850"/></svg></button>
  <button class="tb" aria-label="移动特征"><svg viewBox="0 0 24 24"><use href="#base"/><path d="M12 4l5-1v11l-5 1z" fill="#6ca0f4"/><path d="M0 10l9 2" stroke="#d02020" stroke-width="2"/></svg></button>
  <i class="sep"></i>
  <button class="tb" aria-label="替换特征"><svg viewBox="0 0 24 24"><use href="#base"/><path d="M7 8h5v7H7z" fill="#a8ccff" stroke="#6090e0" stroke-width=".7"/><path d="M9 11l7-6" stroke="#e08020" stroke-width="2"/><path d="M18 1h5v8h-5z" fill="#f8c860" stroke="#c08010"/></svg></button>
  <i class="sep"></i>
  <button class="tb" aria-label="抑制特征"><svg viewBox="0 0 24 24"><use href="#base"/><path d="M11 6l5-1v9h-5z" fill="#6ca0f4"/><path d="M9 9C5 11 1 8 1 5s6-6 8-1" stroke="#20388c" stroke-width="2"/><path d="M17 16h6v7h-6z" fill="#8a90a0" stroke="#333"/><path d="M18 16c0-4 4-4 4 0" stroke="#444" stroke-width="1.500"/></svg></button>
  <button class="tb" aria-label="取消抑制"><svg viewBox="0 0 24 24"><path d="M1 15l7-4h3V7l6-1v5l5 1v6l-6 5-15-2z" fill="#92959a"/><path d="M1 15l15 2 6-5v6l-6 5-15-2z" fill="#7c7f84"/><path d="M9 9C5 11 1 8 1 5s6-6 8-1" stroke="#8c9094" stroke-width="2"/></svg></button>
  <i class="more"></i>
 </div>
 <div class="band">
  <i class="grip"></i>
  <button class="tb" aria-label="X 成形"><svg viewBox="0 0 24 24"><path d="M4 2l9 1 10 7-9 11-13-8z" fill="#e0dcff" stroke="#7030c0"/><path d="M4 2l9 8 1 11M1 13l12-3 10 0M13 3v7" stroke="#7030c0" stroke-width=".8"/><g class="dot"><circle cx="4" cy="2" r="1.600"/><circle cx="13" cy="3" r="1.600"/><circle cx="22" cy="10" r="1.600"/><circle cx="14" cy="21" r="1.600"/><circle cx="2" cy="13" r="1.600"/></g><use href="#wrench" x="0" y="6" width="17" height="17"/></svg></button>
  <button class="tb" aria-label="扩大"><svg viewBox="0 0 24 24"><path d="M9 2c4 4 9 6 14 7-5 3-8 7-11 13-4-5-7-8-11-9 4-3 7-6 8-11z" fill="#f8c8c8" stroke="#d02030" stroke-width="1.300"/><path d="M10 6l8 4-6 8-6-6z" fill="#c8d0ff" stroke="#5050b0" stroke-width=".8"/><path d="M8 9l7 5M14 8l-5 7" stroke="#7070c0" stroke-width=".8"/></svg></button>
  <i class="sep"></i>
  <button class="tb" aria-label="剖切"><svg viewBox="0 0 24 24"><path d="M2 6c4-2 6 2 9 0v12c-3 2-5-2-9 0zM13 6c4-2 6 1 9-2v12c-3 2-5 0-9 2z" fill="#90c0f4" stroke="#6090c8" stroke-width=".7"/><path d="M12 4v19" stroke="#666" stroke-width="1.500" stroke-dasharray="3 1"/><path d="M9 6l3-5 3 5z" fill="#e08020"/></svg></button>
  <i class="more"></i>
 </div>
 <div class="band">
  <i class="grip"></i>
  <button class="tb" aria-label="编辑曲线参数"><svg viewBox="0 0 24 24"><path d="M10 1h8l5 4v12H10z" fill="#eef2ff" stroke="#6878a8"/><path d="M12 7h8M12 10h8M12 13h6" stroke="#d04040"/><use href="#wrench" x="-1" y="6" width="18" height="18"/></svg></button>
  <button class="tb" aria-label="修剪曲线"><svg viewBox="0 0 24 24"><path d="M1 12h20M6 3c8 0 13 4 15 9" stroke="#222" stroke-width="1.500"/><path d="M2 23c4-9 12-3 16-11" stroke="#777" stroke-dasharray="2 1"/><path d="M13 5l10 12" stroke="#e02020" stroke-width="2"/></svg></button>
  <button class="tb" aria-label="修剪角"><svg viewBox="0 0 24 24"><path d="M1 21c10 1 13-7 13-17" stroke="#222" stroke-width="1.500"/><path d="M14 4v8M18 21c4-6 4-12 4-18" stroke="#e02020" stroke-width="2"/></svg></button>
  <button class="tb" aria-label="光顺样条"><svg viewBox="0 0 24 24"><path d="M1 10c6-1 7-6 11-4s6-5 11-3" stroke="#222" stroke-width="2"/><path d="M1 22c5-8 14-9 22-5" stroke="#e02020" stroke-width="1.800"/><path d="M11 7v4" stroke="#e04020" stroke-width="2"/><path d="M8 10h6l-2 4z" fill="#f07010"/></svg></button>
  <i class="more"></i>
 </div>
</div>
</div>

<div class="filter">
  <label class="combo wide1"><select aria-label="选择过滤器"><option>没有选择过滤器</option></select><i class="arrow"></i></label>
  <label class="combo wide2"><select aria-label="选择范围"><option>整个装配</option></select><i class="arrow"></i></label>
  <button class="sb" aria-label="链"><svg viewBox="0 0 18 18"><path d="M1 3h7v7H1zM1 11h8v6H3z" fill="#aaa" stroke="#999"/><rect x="9" y="1" width="4" height="8" rx="2" stroke="#998" stroke-width="1.500"/><rect x="12" y="6" width="4" height="8" rx="2" stroke="#998" stroke-width="1.500"/></svg></button>
  <i class="sep"></i>
  <button class="sb" aria-label="捕捉"><svg viewBox="0 0 18 18"><path d="M1 1h15v15H1z" fill="#f0dcdc" stroke="#c83030" stroke-width="1.200"/><path d="M7 3v9M3 8h9" stroke="#444"/><circle cx="7" cy="8" r="2" stroke="#c02020"/><path d="M9 9h8l-3 3v4l-2-1v-3z" fill="#f8c020" stroke="#a07010" stroke-width=".6"/></svg></button><i class="drop small"></i>
  <button class="sb" aria-label="返回"><svg viewBox="0 0 18 18"><path d="M13 5c3 6-3 8-8 7" stroke="#879c9c" stroke-width="2.500"/><path d="M2 12l6-4v8z" fill="#879c9c"/></svg></button>
  <button class="sb" aria-label="实体"><svg viewBox="0 0 18 18"><path d="M1 10l6-6 6 0 4 4-1 5-5 3-9-2z" fill="#eee" stroke="#444"/><path d="M10 16l1-5 6-3M11 11l-9-1" stroke="#444"/><path d="M5 9l4-4" stroke="#d02020" stroke-width="1.500"/></svg></button>
  <button class="sb" aria-label="点"><svg viewBox="0 0 18 18"><path d="M2 6c2-5 7-4 7 1" stroke="#888" stroke-width="2"/><path d="M1 2v6l5-2z" fill="#888"/><circle cx="12" cy="12" r="3" stroke="#888"/><path d="M12 7v10M7 12h10" stroke="#888"/></svg></button>
  <button class="sb" aria-label="查找"><svg viewBox="0 0 18 18"><path d="M1 4l5-2 6 1 2 5-5 1-3-2-4 1z" fill="#888"/><path d="M11 8h5v9h-4z" fill="#9b9b8e" stroke="#888"/></svg></button>
  <i class="sep"></i>
  <button class="sb" aria-label="框选"><svg viewBox="0 0 18 18"><path d="M2 3h14v12H2z" stroke="#111" stroke-width="1.300" stroke-dasharray="2.500 1.500"/><circle class="dot" cx="2" cy="3" r="1.500"/><circle class="dot" cx="16" cy="15" r="1.500"/></svg></button><i class="drop"></i>
  <i class="sep"></i>
  <button class="sb on" aria-label="着色显示"><svg viewBox="0 0 18 18"><path d="M1 5l7-3 9 3-8 3z" fill="#cfe8ff" stroke="#4b84d0" stroke-width=".5"/><path d="M1 5l8 3v9l-8-4z" fill="#58a8f4"/><path d="M17 5L9 8v9l8-5z" fill="#1f68d0"/><path d="M8 2v9l5 2M1 5l12 2" stroke="#e04050" stroke-width=".8"/></svg></button>
  <i class="tri edge"></i>
</div>

<div class="status">
  <p></p><output>34 个对象 已取消选择&nbsp; - 全部 0</output><i class="cell c1"></i><i class="cell c2"></i>
  <button aria-label="全屏"><svg viewBox="0 0 16 16"><path d="M1 4V1h3M12 1h3v3M15 12v3h-3M4 15H1v-3" stroke="#222" fill="none"/><path d="M3 3h10v10H3z" fill="#fff" stroke="#222"/><path d="M5 5h6v6H5z" fill="#3890e0"/></svg></button>
</div>
<div class="strip"><div class="groove"></div>
  <div class="scroller"><button aria-label="左移"><svg viewBox="0 0 18 18"><path d="M13 4L5 9l8 5" stroke="#5c5c5c" stroke-width="2.500"/></svg></button><span></span><button aria-label="右移"><svg viewBox="0 0 18 18"><path d="M5 4l8 5-8 5" stroke="#5c5c5c" stroke-width="2.500"/></svg></button></div>
</div>

<main class="work">
<aside class="rail">
  <button class="tab" aria-label="装配导航器"><svg viewBox="0 0 24 24"><path d="M1 1h5v10H1zM1 6h10v5H1z" fill="#fff23c" stroke="#807808"/><path d="M12 10h11M18 21h6" stroke="#222" stroke-width="1.400"/><path d="M4 12v11M4 18h5" stroke="#5058c8"/><path d="M9 15h7v7H9z" fill="#fff23c" stroke="#807808"/></svg></button>
  <button class="tab active" aria-label="部件导航器"><svg viewBox="0 0 24 24"><path d="M1 3v6c2 2 5 2 7 0V3" fill="#f0b0b0" stroke="#a03030"/><ellipse cx="4.500" cy="3" rx="3.500" ry="1.500" fill="#fff" stroke="#a03030"/><path d="M10 10h14M18 21h6" stroke="#222" stroke-width="1.400"/><path d="M4 12v11M4 19h5" stroke="#5058c8"/><circle cx="13" cy="19" r="4" fill="#fff" stroke="#904040"/><circle cx="13" cy="19" r="1.300" stroke="#904040"/></svg></button>
  <button class="tab" aria-label="重用库"><svg viewBox="0 0 24 24"><path d="M3 1h4v15l3 2-2 4H2l-2-3 3-3z" fill="url(#B)" stroke="#2050b0" stroke-width=".8"/><path d="M12 4l3-2h8v20H12v-5h4V9h-4z" fill="url(#O)" stroke="#a87008"/><circle cx="19" cy="6" r="1.500" fill="#640"/><circle cx="19" cy="18" r="1.500" fill="#640"/></svg></button>
  <button class="tab gap" aria-label="浏览器"><svg viewBox="0 0 24 24"><path d="M4 1h11l6 6v16H4z" fill="#fff1a8" stroke="#6078b0"/><path d="M15 1v6h6z" fill="#a8c0f0" stroke="#6078b0"/><circle cx="12" cy="14" r="6" fill="#2864e0"/><path d="M7 12c2-5 8-5 10-1-3 3-6-1-10 1z" fill="#48c850"/></svg></button>
  <button class="tab gap" aria-label="历史记录"><svg viewBox="0 0 24 24"><circle cx="12" cy="12" r="9" fill="#e8f6ff" stroke="#747d78" stroke-width="2"/><circle cx="12" cy="12" r="7" stroke="#345" stroke-dasharray="1 2.700"/><path d="M12 6v6h6" stroke="#111" stroke-width="1.500"/></svg></button>
  <button class="tab" aria-label="系统材料"><svg viewBox="0 0 24 24"><path d="M9 2h14v18H9z" fill="#fff" stroke="#668"/><path d="M1 4h3l5-2v18l-5 3-3-2z" fill="#cfe2e6" stroke="#789"/><path d="M4 4v19" stroke="#789"/><circle cx="13" cy="6" r="2" fill="#4048d0"/><circle cx="13" cy="11" r="2" fill="#30b040"/><circle cx="13" cy="16" r="2" fill="#e02040"/><path d="M16 6h5M16 11h5M16 16h5" stroke="#333"/></svg></button>
  <button class="tab" aria-label="可视化"><svg viewBox="0 0 24 24"><path d="M2 1h8v22H2z" fill="url(#R)"/><use href="#wand"/></svg></button>
  <button class="tab" aria-label="加工向导"><svg viewBox="0 0 24 24"><path d="M4 4h5v15H4z" fill="#4058c8" stroke="#101c70" stroke-dasharray="1 1"/><path d="M12 10l11-2M8 14l12-1M6 18l8-1" stroke="#222"/><path d="M1 22l5-3 4 3M5 17v6" stroke="#f0a020" stroke-width="1.500"/><use href="#wand"/></svg></button>
  <button class="tab" aria-label="角色"><svg viewBox="0 0 24 24"><path d="M11 18c0-9 13-9 13 0z" fill="#188a30"/><path d="M15 12l2 4 2-4z" fill="#fff"/><circle cx="17" cy="6" r="5" fill="#f0b070"/><path d="M12 5c0-6 10-6 10 0-3-1-6-2-10 0z" fill="#c08820"/><circle cx="6" cy="13" r="5.500" fill="#4c4238"/><circle cx="8" cy="14" r="4" fill="#f8c090"/><path d="M0 24c0-8 13-8 13 0z" fill="#8848d0"/></svg></button>
  <button class="tab" aria-label="系统场景"><svg viewBox="0 0 24 24"><path d="M1 3h22v18H1z" fill="#2e76c4" stroke="#222"/><path d="M2 17c4-10 8-9 12-3 3-3 6 1 8 6H2z" fill="#f0f0ff"/><path d="M6 20l4-7 4 5 3-3 5 5z" fill="#c4c0e4"/><circle cx="18" cy="7" r="3" fill="#ffe428"/></svg></button>
</aside>
<div class="edgebar"></div>
<section class="canvas">
<svg class="scene" viewBox="43 213 1397 663" role="img" aria-label="模型">
  <g stroke="#1c2224" stroke-width="1" stroke-linejoin="round">
    <path d="M509 273L646 486 598 628 461 415z" fill="#788587"/>
    <path d="M646 486L865 503 817 646 598 628z" fill="#616d70"/>
    <path d="M509 273L728 291 865 503 646 486z" fill="#c5dbe1"/>
    <path d="M548 332L403 436 593 597 613 582z" fill="#aed6ea" stroke="none"/>
    <path d="M548 332L403 436 593 597 613 582" fill="none"/>
    <path d="M548 332L613 582" stroke="#9fb9c4"/>
  </g>
  <path d="M509 273L728 291 865 503 646 486zM548 332L737 492 613 582" fill="none" stroke="#3f5cfb" stroke-width="1.800"/>
  <g fill="none" stroke="#918966" stroke-width="1.600">
    <path d="M687 388L713 313M723 282L706 311C710 316 715 317 720 314zM684 387L766 394M797 396L768 387C764 388 764 398 769 400M770 388v10M687 388L717 434M711 435C715 427 721 427 724 432L729 453"/>
    <path d="M797 397L768 401C764 400 763 396 765 393M711 438L728 452" stroke="#c9c5c2"/>
    <path d="M706 335L760 339 742 391 761 421M706 336L726 369 709 421 766 425" stroke-dasharray="8 8"/>
    <path d="M688 385L700 350" stroke="#0000f0" stroke-width="2"/><path d="M690 393L702 411" stroke="#f00" stroke-width="2"/>
  </g>
  <g class="axis"><g fill="#918966"><text x="725" y="277">Z</text><text x="804" y="397">Y</text><text x="732" y="456">X</text></g><g fill="#f79a45"><text x="703" y="346">ZC</text><text x="732" y="391">YC</text><text x="705" y="414">XC</text></g></g>
  <g class="axis" stroke-width="2"><path d="M112 805L123 775" stroke="#2d2dff"/><path d="M112 805L144 808" stroke="#00cf83"/><path d="M112 805L124 824" stroke="#ff2a2a"/><circle cx="112" cy="805" r="4" fill="#b0b0b0"/><g stroke="none"><text x="122" y="773" fill="#2d2dff">Z</text><text x="150" y="812" fill="#00cf83">Y</text><text x="125" y="832" fill="#ff2a2a">X</text></g></g>
</svg>
<button class="ball">62</button>
<div class="ime">
  <svg class="qq" viewBox="0 0 34 36"><path d="M8 20C2 24 0 27 1 30l5-3z" fill="#c81818"/><ellipse cx="17" cy="24" rx="11" ry="10" fill="#161616"/><ellipse cx="18" cy="26" rx="7" ry="8" fill="#fff"/><path d="M22 14l10-8-1 6-6 8z" fill="#161616"/><ellipse cx="13" cy="10" rx="11" ry="10" fill="#1b1b1f"/><ellipse cx="11" cy="9" rx="3" ry="4" fill="#fff"/><ellipse cx="16.500" cy="8" rx="3" ry="4" fill="#fff"/><circle cx="12" cy="9" r="1.500" fill="#000"/><circle cx="16" cy="8.500" r="1.500" fill="#000"/><ellipse cx="14" cy="15" rx="7" ry="3" fill="#f8b818"/><path d="M4 18c8 5 14 3 20-3l1 5c-7 5-14 6-21 3z" fill="#d42020"/><ellipse cx="8" cy="33" rx="6" ry="2.500" fill="#f8a818"/><ellipse cx="26" cy="33" rx="6" ry="2" fill="#f8a818"/></svg>
  <div class="pill">
    <button class="zh">中</button>
    <button aria-label="半角"><svg viewBox="0 0 16 16"><path d="M10 1c4 6-1 11-9 10 5 6 14 3 14-4 0-3-2-5-5-6z" fill="#f4fbff" stroke="#3272a8" stroke-width=".8"/></svg></button>
    <button aria-label="标点"><svg viewBox="0 0 16 16"><circle cx="4" cy="8" r="2" fill="none" stroke="#f4fbff" stroke-width="1.500"/><path d="M9 6h4c1 3-1 5-3 6l1-3H9z" fill="#f4fbff" stroke="#3272a8" stroke-width=".4"/></svg></button>
    <button aria-label="软键盘"><svg viewBox="0 0 16 16"><rect x=".5" y="3.500" width="15" height="9" rx="1" fill="#f4fbff" stroke="#2a6aa0"/><path d="M2 6h12M2 8h12M3 10.500h9" stroke="#2a6aa0" stroke-dasharray="1 1"/></svg></button>
    <button aria-label="切换"><svg viewBox="0 0 16 16"><path d="M7 2v8H1zM5 9v4M9 14V6h6zM11 7V3" fill="#f4fbff" stroke="#2a6aa0" stroke-width=".8"/><path d="M7 2v11M9 3v11" stroke="#f4fbff" stroke-width="1.500"/></svg></button>
    <button aria-label="设置"><svg viewBox="0 0 16 16"><path d="M2 14c-1-1-1-2 0-3l5-4c-1-4 2-6 5-6l-2 4 2 2 3-2c1 4-2 6-5 6l-5 4c-1 1-2 0-3-1z" fill="#f4fbff" stroke="#2a6aa0" stroke-width=".8"/></svg></button>
  </div>
</div>
<svg class="mark" viewBox="1136 770 304 104" role="img" aria-label="3D世界网">
  <path d="M1181 775L1221 797V845L1181 868 1141 845V797z" fill="#6b9dd3" stroke="#fafcfd" stroke-width="5" stroke-linejoin="round" paint-order="stroke"/>
  <path d="M1195 783L1221 797V845L1181 868 1163 857C1160 849 1159 842 1160 835L1181 847 1203 834V808C1203 800 1199 790 1195 783z" fill="#72c5eb"/>
  <path d="M1156 789C1174 788 1190 794 1203 808C1203 800 1200 790 1195 783M1141 830C1143 816 1150 808 1159 808M1160 835C1159 845 1162 855 1166 860M1221 815C1221 830 1200 846 1182 847C1190 853 1200 854 1209 852" fill="none" stroke="#d8edfa" stroke-width="1.200"/>
  <path d="M1181 796L1203 808V834L1181 847 1159 834V808z" fill="#fafcfd"/>
  <path d="M1181 801L1199 811 1181 821 1164 811z" fill="#6b9dd3"/><path d="M1164 811L1181 821V842L1164 832z" fill="#6b9dd3"/><path d="M1199 811L1181 821V842L1199 832z" fill="#72c5eb"/><path d="M1164 811L1181 821 1199 811M1181 821V842" stroke="#d8edfa" fill="none"/>
  <text class="name" x="1232" y="831">3D世界网</text><text class="site" x="1234" y="852">WWW.3DSJW.COM</text>
</svg>
</section>
</main>
</div>
</body>
</html>
```
FILE: styles.css
```
* { box-sizing: border-box; }
body { margin: 0; font: 12px "Noto Sans", "Noto Sans CJK SC", sans-serif; color: #000; overflow: hidden; }
button { border: 0; padding: 0; margin: 0; background: none; font: inherit; color: inherit; }
svg { display: block; fill: none; }
.defs { position: absolute; width: 0; height: 0; }
.app { display: flex; flex-direction: column; height: 100vh; background: #d8d8d8; }

.title { display: flex; align-items: center; height: 23px; padding: 0 4px 0 3px; border-bottom: 1px solid #000; border-top: 1px solid #000; background: linear-gradient(#77777c 0, #56565a 6px, #1c1c1c 7px); color: #fff; border-radius: 5px 5px 0 0; }
.logo { width: 17px; height: 17px; margin-right: 3px; }
h1 { margin: 0; font-size: 11px; font-weight: 400; }
.brand { margin-left: auto; font-size: 13px; font-weight: 800; }
.wins { display: flex; gap: 4px; margin-left: 26px; }
.win { width: 16px; height: 16px; border-radius: 3px; border: 1px solid #777; background: linear-gradient(#777, #333); }
.win svg { width: 14px; height: 14px; }
.shut { background: linear-gradient(#f08060, #d83010); border-color: #f0a090; }

.menu { display: flex; align-items: center; height: 24px; background: linear-gradient(#e8e8e8, #dedede); border-bottom: 1px solid #bbb; padding: 0 5px 1px 0; }
.menu > button { margin-right: 13px; white-space: nowrap; }
.part { width: 17px; height: 17px; margin-right: 5px; }
.docs { display: flex; gap: 2px; margin-left: auto; }
.docs button { width: 17px; height: 17px; border: 1px solid #777; border-radius: 4px; background: #fafafa; }
.docs svg { width: 15px; height: 15px; }

.bars { background: linear-gradient(#e0e0e0, #cecece); border-bottom: 1px solid #999; }
.row { display: flex; height: 34px; }
.inset { padding-left: 10px; }
.band { display: flex; align-items: center; border: solid #bbb; border-width: 0 1px 1px 0; box-shadow: inset 0 1px #f0f0f0; background: linear-gradient(#e2e2e2, #d4d4d4); margin-right: -1px; }
.inset .band { background: linear-gradient(#d8d8d8, #cfcfcf); }
.inset .band:first-child { border-left: 1px solid #c4c4c4; }
.grip { flex: none; width: 8px; height: 22px; background: radial-gradient(circle, #aaa 1px, #f4f4f4 1px, transparent 2px) 3px 0 / 4px 4px repeat-y; }
.sep { flex: none; width: 6px; height: 30px; background: linear-gradient(90deg, transparent 2px, #bbb 2px, #bbb 3px, #fafafa 3px, #fafafa 4px, transparent 4px); }
.tb { display: grid; place-items: center; flex: none; width: 31px; height: 30px; }
.tb svg { width: 24px; height: 24px; }
.on { background: #fff; border: 1px solid #666; border-radius: 3px; }
.start { display: flex; align-items: center; width: 66px; padding-left: 3px; gap: 3px; font-size: 13px; white-space: nowrap; }
.start svg { width: 24px; height: 24px; }
.tri, .drop::after, .more::after { content: ""; display: block; width: 6px; height: 3px; background: #000; clip-path: polygon(0 0, 100% 0, 50% 100%); }
.drop { flex: none; width: 12px; padding-left: 3px; }
.more { flex: none; width: 14px; align-self: flex-end; padding: 0 0 7px 3px; }
.dot { fill: #d81010; }
.pur { stroke: #64208c; stroke-width: 1.3; }
.red { stroke: #d02828; stroke-width: 1.1; stroke-dasharray: 3 1; }

.filter { display: flex; align-items: center; height: 28px; padding: 0 3px 0 5px; background: linear-gradient(#bfbfbf, #d4d4d4 9px, #d8d8d8); border-bottom: 1px solid #bbb; }
.filter .sep { height: 22px; }
.combo { display: flex; height: 17px; border: 1px solid #777; border-radius: 3px; background: #fff; overflow: hidden; margin-right: 8px; }
.wide1 { width: 125px; }
.wide2 { width: 132px; margin-right: 5px; }
.combo select { flex: 1; min-width: 0; appearance: none; border: 0; padding: 0 0 0 1px; background: none; color: #000; font: 12px/14px "Noto Sans CJK SC", sans-serif; }
.arrow { display: grid; place-items: center; width: 15px; background: linear-gradient(#a8d0f8, #68a8e8); border-left: 1px solid #456; }
.arrow::after { content: ""; width: 11px; height: 7px; background: #111; clip-path: polygon(0 0, 100% 0, 50% 100%); }
.sb { display: grid; place-items: center; width: 22px; height: 22px; margin-right: 1px; }
.sb svg { width: 17px; height: 17px; }
.small { width: 7px; padding-left: 0; }
.edge { margin: 8px 0 0 auto; }

.status { display: flex; align-items: stretch; height: 21px; border-top: 1px solid #f4f4f4; border-bottom: 1px solid #aaa; background: #d9d9d9; }
.status p { flex: 681; margin: 0; border-right: 1px solid #aaa; }
.status output { flex: 679; padding-left: 3px; font-weight: 700; line-height: 17px; white-space: nowrap; }
.cell { border-left: 1px solid #f8f8f8; box-shadow: -1px 0 #aaa; }
.c1 { width: 20px; }
.c2 { width: 36px; }
.status button { width: 22px; padding-left: 4px; border-left: 1px solid #f4f4f4; }
.status svg { width: 14px; height: 14px; }

.strip { position: relative; flex: none; height: 14px; padding: 5px 5px 0; background: linear-gradient(#c4c4c4, #d8d8d8); border-bottom: 1px solid #888; box-shadow: inset 0 -1px #fff; }
.groove { height: 4px; border: 1px solid #999; border-bottom-color: #eee; border-radius: 2px; background: #ccc; }
.scroller { position: absolute; z-index: 2; left: 42px; top: 0; display: flex; width: 108px; height: 20px; border: 1px solid #777; }
.scroller button { width: 19px; background: linear-gradient(#fff, #ccc); }
.scroller span { flex: 1; background: linear-gradient(#444, #555 6px, #181818 7px); }

.work { display: flex; flex: 1; min-height: 0; }
.rail { display: flex; flex-direction: column; align-items: flex-end; gap: 2px; width: 33px; padding-top: 17px; background: linear-gradient(90deg, #b6b6b6, #a4a4a4); border-right: 1px solid #666; }
.tab { flex: none; display: grid; place-items: center; width: 26px; height: 40px; border: 1px solid #666; border-right: 0; border-radius: 4px 0 0 4px; background: linear-gradient(90deg, #e4e4e4, #ccc); box-shadow: inset 1px 1px #fff; }
.tab svg { width: 24px; height: 24px; }
.active { width: 29px; height: 44px; margin: -2px -1px; background: #eee; }
.gap { margin-top: 12px; }
.edgebar { width: 10px; background: #ebebeb; border-right: 1px solid #aaa; }
.canvas { position: relative; flex: 1; overflow: hidden; background: linear-gradient(#b3b4b6, #e6e7e9 78%, #e6e7e9); border-bottom: 1px solid #ccc; box-shadow: inset -2px 0 #d8d8da; }
.scene { position: absolute; left: 0; top: 0; width: 1397px; height: 663px; }
.axis { font: 10px "Liberation Sans", sans-serif; }
.ball { position: absolute; right: -28px; top: 383px; width: 46px; height: 46px; border: 3px solid #eee; border-radius: 50%; background: #fc8a2c; box-shadow: 0 0 0 1px #999, inset 0 0 0 1px #b04000, -2px 4px 6px #888; color: #fff; font: 700 11px "DejaVu Sans", sans-serif; text-align: left; padding-left: 2px; }
.ime { position: absolute; right: 15px; bottom: 130px; display: flex; align-items: center; }
.qq { width: 34px; height: 36px; margin-right: -15px; }
.pill { position: relative; display: flex; align-items: center; justify-content: space-between; width: 134px; height: 22px; margin-top: 8px; padding: 0 9px; border: 1px solid #3278c8; border-radius: 11px; background: linear-gradient(#a4e0fc, #68a8e0); }
.pill svg { width: 16px; height: 16px; }
.zh { color: #fff; font-weight: 700; font-size: 14px; text-shadow: 0 0 2px #205080; }
.mark { position: absolute; right: 0; bottom: 1px; width: 304px; height: 104px; }
.mark text { fill: #72c5eb; stroke: #fafcfd; paint-order: stroke; stroke-linejoin: round; }
.name { font: 700 46px "Noto Sans CJK SC", sans-serif; stroke-width: 5px; }
.site { font: 700 18px "DejaVu Sans", sans-serif; stroke-width: 3px; }
```
